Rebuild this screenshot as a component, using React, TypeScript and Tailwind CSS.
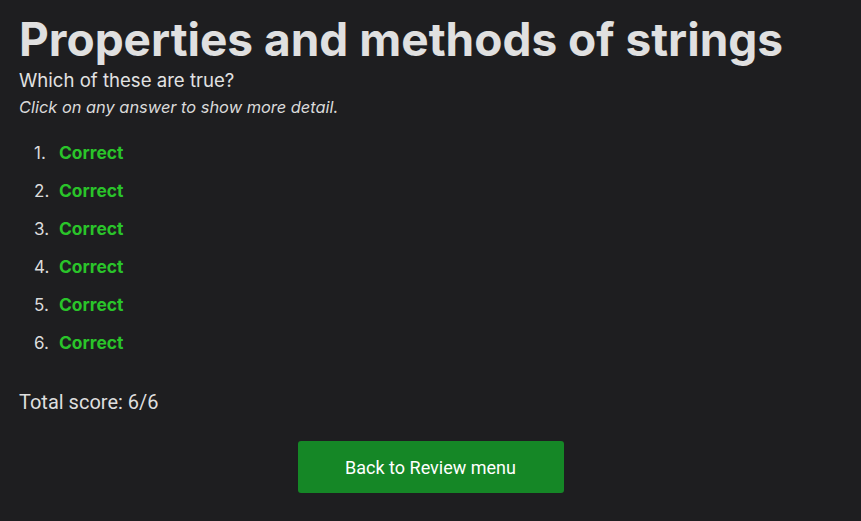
import React from 'react';

const answers = ['Correct', 'Correct', 'Correct', 'Correct', 'Correct', 'Correct'];

export default function App() {
    return (
        <div className="min-h-[521px] bg-[#1e1e20] text-[#e2e2e2] px-[19px] pt-[11px] font-['Inter',sans-serif]">
            <h1 className="text-[46px] font-bold leading-[56px] text-[#e0e0e0]">Properties and methods of strings</h1>
            <p className="text-[18.6px] leading-[24px] mt-[1px]">Which of these are true?</p>
            <p className="text-[16.4px] italic leading-[30px] text-[#dadada]">Click on any answer to show more detail.</p>

            <ol className="mt-[19px] pl-[15px]">
                {answers.map((a, i) => (
                    <li key={i} className="flex h-[38px] items-start text-[17px] leading-[24px]">
                        <span className="w-[25px] text-[#dcdcdc]">{i + 1}.</span>
                        <span className="font-bold text-[#2ac42a] text-[17.4px]">{a}</span>
                    </li>
                ))}
            </ol>

            <p className="mt-[21px] text-[20px] leading-[24px] font-['Roboto',sans-serif] text-[#dedede]">Total score: 6/6</p>

            <div className="flex justify-center mt-[27px]">
                <button className="w-[266px] h-[52px] rounded-[3px] bg-[#158726] text-white text-[18px] font-['Roboto',sans-serif]">
                    Back to Review menu
                </button>
            </div>
        </div>
    );
}
